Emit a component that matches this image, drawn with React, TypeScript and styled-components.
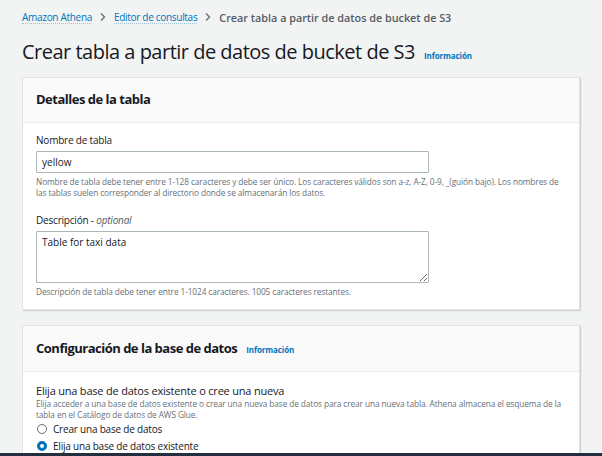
import styled, { createGlobalStyle } from "styled-components";

const GlobalStyle = createGlobalStyle`
  * {
    box-sizing: border-box;
  }
  html, body {
    margin: 0;
    padding: 0;
    background-color: #f2f3f3;
    font-family: "Open Sans", "Noto Sans", sans-serif;
    color: #16191f;
  }
`;

const Chevron = () => (
  <svg width="8" height="10" viewBox="0 0 8 10" fill="none">
    <path d="M2 1.5 L5.5 5 L2 8.5" stroke="#687078" strokeWidth="1.4" />
  </svg>
);

export default function App() {
  return (
    <>
      <GlobalStyle />
      <Page>
        <Breadcrumbs>
          <Crumb>Amazon Athena</Crumb>
          <Chevron />
          <Crumb>Editor de consultas</Crumb>
          <Chevron />
          <Current>Crear tabla a partir de datos de bucket de S3</Current>
        </Breadcrumbs>

        <TitleRow>
          <Title>Crear tabla a partir de datos de bucket de S3</Title>
          <InfoLink>Información</InfoLink>
        </TitleRow>

        <Card>
          <CardHeader>
            <CardTitle>Detalles de la tabla</CardTitle>
          </CardHeader>
          <CardBody>
            <Field>
              <Label>Nombre de tabla</Label>
              <Input defaultValue="yellow" />
              <Hint>
                Nombre de tabla debe tener entre 1-128 caracteres y debe ser único. Los caracteres válidos son a-z, A-Z, 0-9, _(guión bajo). Los nombres de las tablas suelen corresponder al directorio donde se almacenarán los datos.
              </Hint>
            </Field>
            <Field>
              <Label>
                Descripción - <em>optional</em>
              </Label>
              <TextArea defaultValue="Table for taxi data" />
              <Hint>Descripción de tabla debe tener entre 1-1024 caracteres. 1005 caracteres restantes.</Hint>
            </Field>
          </CardBody>
        </Card>

        <Card>
          <CardHeader $tall>
            <CardTitle>Configuración de la base de datos</CardTitle>
            <InfoLink $small>Información</InfoLink>
          </CardHeader>
          <CardBody>
            <GroupLabel>Elija una base de datos existente o cree una nueva</GroupLabel>
            <Hint $wide>
              Elija acceder a una base de datos existente o crear una nueva base de datos para crear una nueva tabla. Athena almacena el esquema de la tabla en el Catálogo de datos de AWS Glue.
            </Hint>
            <RadioRow>
              <Radio />
              Crear una base de datos
            </RadioRow>
            <RadioRow>
              <Radio $checked />
              Elija una base de datos existente
            </RadioRow>
          </CardBody>
        </Card>
      </Page>
      <BottomBar />
    </>
  );
}

const Page = styled.div`
  width: 602px;
  height: 453px;
  overflow: hidden;
  padding: 9px 22px 0 22px;
`;

const Breadcrumbs = styled.nav`
  display: flex;
  align-items: center;
  gap: 7px;
  height: 16px;
  font-size: 10px;
  letter-spacing: -0.3px;
`;

const Crumb = styled.a`
  color: #0073bb;
  border-bottom: 1px dotted #9fc3dc;
  line-height: 12px;
`;

const Current = styled.span`
  color: #545b64;
  font-weight: 600;
  font-size: 10.8px;
  letter-spacing: 0;
`;

const TitleRow = styled.div`
  display: flex;
  align-items: baseline;
  gap: 9px;
  margin-top: 13px;
  height: 39px;
`;

const Title = styled.h1`
  margin: 0;
  font-size: 20px;
  font-weight: 400;
  letter-spacing: -0.5px;
  color: #16191f;
`;

const InfoLink = styled.span<{ $small?: boolean }>`
  color: #0073bb;
  font-size: 8px;
  font-weight: 700;
  letter-spacing: -0.1px;
  ${(p) => (p.$small ? "margin-left: 9px;" : "")}
`;

const Card = styled.section`
  width: 558px;
  background: #ffffff;
  border: 1px solid #e3e4e4;
  box-shadow: 1px 1px 1px rgba(0, 28, 36, 0.15);
  margin-bottom: 15px;
`;

const CardHeader = styled.div<{ $tall?: boolean }>`
  display: flex;
  align-items: baseline;
  background: #fafafa;
  border-bottom: 1px solid #eaeded;
  padding: ${(p) => (p.$tall ? "13px 13px 13px" : "12px 13px 13px")};
`;

const CardTitle = styled.h2`
  margin: 0;
  font-size: 13px;
  font-weight: 700;
  letter-spacing: -0.5px;
  line-height: 19px;
  color: #16191f;
`;

const CardBody = styled.div`
  padding: 10px 13px 12px;
  display: flex;
  flex-direction: column;
`;

const Field = styled.div`
  display: flex;
  flex-direction: column;
  margin-bottom: 15px;
  &:last-child {
    margin-bottom: 0;
  }
`;

const Label = styled.label`
  font-size: 10px;
  line-height: 14px;
  letter-spacing: -0.2px;
  color: #16191f;
  margin-bottom: 4px;
  em {
    color: #545b64;
  }
`;

const Input = styled.input`
  width: 393px;
  height: 22px;
  border: 1px solid #aab7b8;
  border-radius: 1px;
  padding: 0 5px;
  font-family: inherit;
  font-size: 10px;
  color: #16191f;
  outline: none;
`;

const TextArea = styled.textarea`
  width: 393px;
  height: 52px;
  border: 1px solid #aab7b8;
  border-radius: 1px;
  padding: 3px 5px;
  font-family: inherit;
  font-size: 10px;
  color: #16191f;
  outline: none;
  resize: vertical;
  display: block;
`;

const Hint = styled.p<{ $wide?: boolean }>`
  margin: 3px 0 0;
  font-size: 8.3px;
  line-height: 11px;
  letter-spacing: -0.1px;
  color: #687078;
  ${(p) => (p.$wide ? "margin-top: 0;" : "")}
`;

const GroupLabel = styled.div`
  font-size: 11px;
  line-height: 15px;
  letter-spacing: -0.2px;
  color: #16191f;
  margin-top: 1px;
`;

const RadioRow = styled.label`
  display: flex;
  align-items: center;
  gap: 6px;
  height: 17px;
  font-size: 10px;
  letter-spacing: -0.2px;
  color: #16191f;
  padding-left: 1px;
`;

const Radio = styled.span<{ $checked?: boolean }>`
  width: 10px;
  height: 10px;
  border-radius: 50%;
  border: ${(p) => (p.$checked ? "3px solid #0073bb" : "1px solid #687078")};
  background: #fff;
  flex-shrink: 0;
`;

const BottomBar = styled.div`
  height: 3px;
  background: #232f3e;
`;
